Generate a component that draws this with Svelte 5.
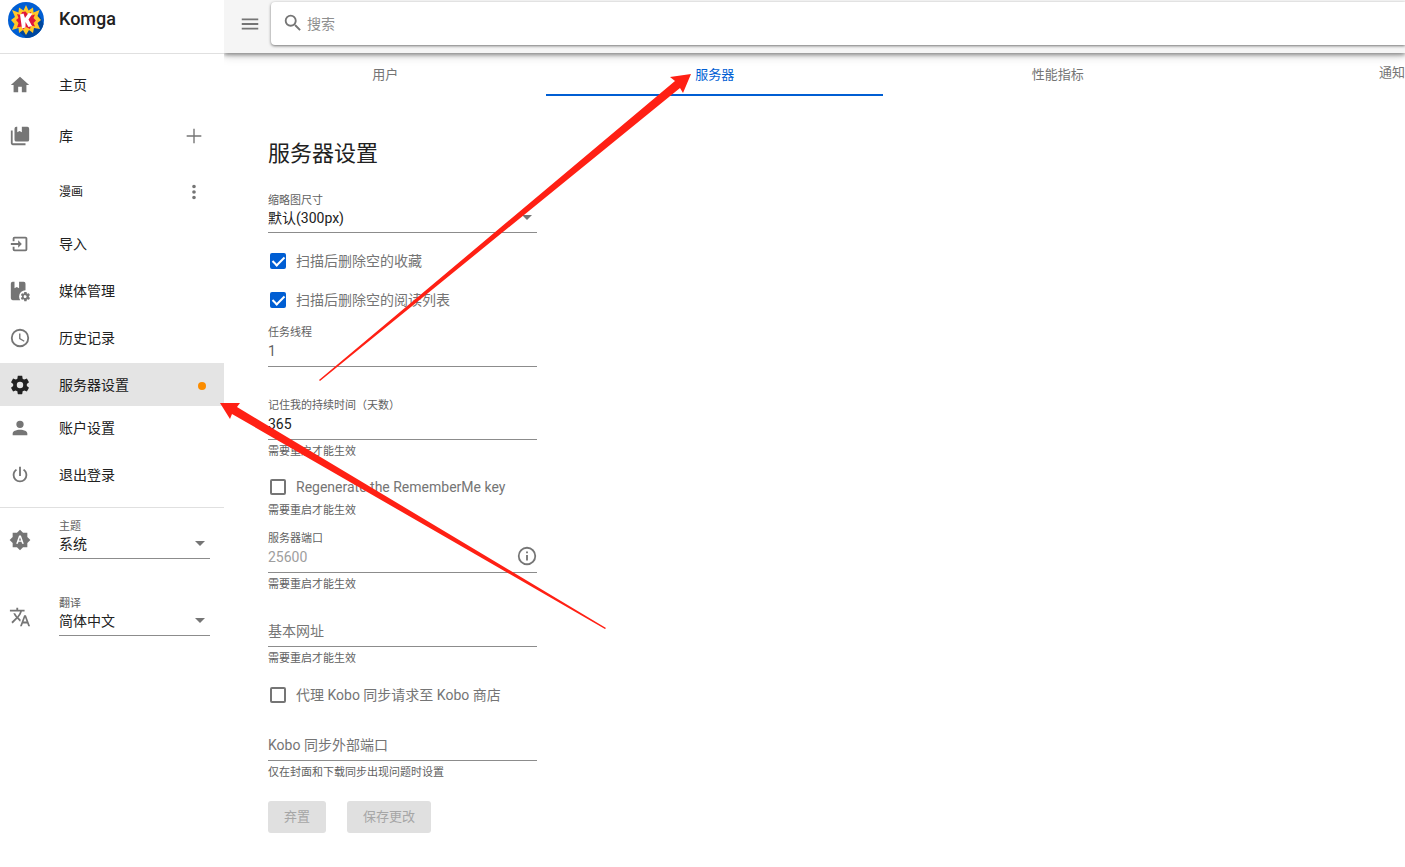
<script lang="ts">
  const icons: Record<string, string> = {
    home: 'M10,20V14H14V20H19V12H22L12,3L2,12H5V20H10Z',
    import: 'M14,12L10,8V11H2V13H10V16M20,18V6C20,4.89 19.1,4 18,4H6A2,2 0 0,0 4,6V9H6V6H18V18H6V15H4V18A2,2 0 0,0 6,20H18A2,2 0 0,0 20,18Z',
    library: 'M8,2H9V8L11.500,6.500L14,8V2H20A2,2 0 0,1 22,4V16A2,2 0 0,1 20,18H8A2,2 0 0,1 6,16V4A2,2 0 0,1 8,2M4,6V20H18V22H4A2,2 0 0,1 2,20V6H4Z',
    bookCog: 'M4,2H6V9L8.500,7.500L11,9V2H16A2,2 0 0,1 18,4V11.100A7,7 0 0,0 11,18A7,7 0 0,0 12.300,22H4A2,2 0 0,1 2,20V4A2,2 0 0,1 4,2M22.700,19.400L21.700,18.600V17.500L22.700,16.700C22.800,16.600 22.900,16.500 22.800,16.300L21.800,14.600C21.700,14.500 21.600,14.500 21.500,14.500L20.200,15L19.400,14.500L19.200,13.200C19.200,13.100 19.100,13 18.900,13H16.900C16.800,13 16.700,13.100 16.600,13.200L16.400,14.500L15.600,15L14.400,14.500C14.300,14.500 14.100,14.500 14,14.600L13,16.300C12.900,16.500 13,16.600 13.100,16.700L14.200,17.500V18.600L13.100,19.400C13,19.500 13,19.600 13,19.800L14,21.500C14.100,21.600 14.300,21.600 14.400,21.600L15.600,21.100L16.400,21.600L16.600,22.900C16.700,23 16.800,23.100 16.900,23.100H18.900C19.100,23.100 19.200,23 19.200,22.900L19.400,21.600L20.200,21.100L21.500,21.600C21.600,21.600 21.700,21.600 21.800,21.500L22.800,19.800C22.900,19.700 22.800,19.500 22.700,19.400M18,19.600A1.600,1.600 0 1,1 18,16.500A1.600,1.600 0 0,1 18,19.600Z',
    clock: 'M12,20A8,8 0 0,0 20,12A8,8 0 0,0 12,4A8,8 0 0,0 4,12A8,8 0 0,0 12,20M12,2A10,10 0 0,1 22,12A10,10 0 0,1 12,22A10,10 0 0,1 2,12A10,10 0 0,1 12,2M12.500,7V12.250L17,14.920L16.250,16.150L11,13V7H12.500Z',
    cog: 'M12,15.5A3.5,3.5 0 0,1 8.5,12A3.5,3.5 0 0,1 12,8.500A3.5,3.5 0 0,1 15.5,12A3.5,3.5 0 0,1 12,15.5M19.43,12.97C19.47,12.65 19.5,12.33 19.5,12C19.5,11.67 19.47,11.34 19.43,11L21.54,9.37C21.73,9.22 21.78,8.95 21.66,8.73L19.66,5.27C19.54,5.05 19.27,4.96 19.05,5.05L16.56,6.05C16.04,5.66 15.5,5.32 14.87,5.07L14.5,2.42C14.46,2.18 14.25,2 14,2H10C9.75,2 9.54,2.18 9.5,2.42L9.13,5.07C8.5,5.32 7.96,5.66 7.44,6.05L4.95,5.05C4.73,4.96 4.46,5.05 4.34,5.27L2.34,8.73C2.21,8.95 2.27,9.22 2.46,9.37L4.57,11C4.53,11.34 4.5,11.67 4.5,12C4.5,12.33 4.53,12.65 4.57,12.97L2.46,14.63C2.27,14.78 2.21,15.05 2.34,15.27L4.34,18.73C4.46,18.95 4.73,19.03 4.95,18.95L7.44,17.94C7.96,18.34 8.5,18.68 9.13,18.93L9.5,21.58C9.54,21.82 9.75,22 10,22H14C14.25,22 14.46,21.82 14.5,21.58L14.87,18.93C15.5,18.67 16.04,18.34 16.56,17.94L19.05,18.95C19.27,19.03 19.54,18.95 19.66,18.73L21.66,15.27C21.78,15.05 21.73,14.78 21.54,14.63L19.43,12.97Z',
    account: 'M12,4A4,4 0 0,1 16,8A4,4 0 0,1 12,12A4,4 0 0,1 8,8A4,4 0 0,1 12,4M12,14C16.42,14 20,15.79 20,18V20H4V18C4,15.79 7.58,14 12,14Z',
    power: 'M16.56,5.44L15.11,6.89C16.84,7.94 18,9.83 18,12A6,6 0 0,1 12,18A6,6 0 0,1 6,12C6,9.83 7.16,7.94 8.88,6.88L7.44,5.44C5.36,6.88 4,9.28 4,12A8,8 0 0,0 12,20A8,8 0 0,0 20,12C20,9.28 18.64,6.88 16.56,5.44M13,3H11V13H13',
    theme: 'M10.85,12.65H13.15L12,9L10.85,12.65M20,8.69V4H15.31L12,0.69L8.69,4H4V8.69L0.69,12L4,15.31V20H8.69L12,23.31L15.31,20H20V15.31L23.31,12L20,8.69M14.3,16L13.6,14H10.4L9.7,16H7.8L11,7H13L16.2,16H14.3Z',
    translate: 'M12.87,15.07L10.33,12.56L10.36,12.53C12.1,10.59 13.34,8.36 14.07,6H17V4H10V2H8V4H1V6H12.17C11.5,7.92 10.44,9.75 9,11.35C8.07,10.32 7.3,9.19 6.69,8H4.69C5.42,9.63 6.42,11.17 7.67,12.56L2.58,17.58L4,19L9,14L12.11,17.11L12.87,15.07M18.5,10H16.5L12,22H14L15.12,19H19.87L21,22H23L18.5,10M15.88,17L17.5,12.67L19.12,17H15.88Z',
    plus: 'M20,12.750H12.750V20H11.250V12.750H4V11.250H11.250V4H12.750V11.250H20V12.750Z',
    dots: 'M12,16A2,2 0 1,1 12,20A2,2 0 0,1 12,16M12,10A2,2 0 1,1 12,14A2,2 0 0,1 12,10M12,4A2,2 0 1,1 12,8A2,2 0 0,1 12,4Z',
    menu: 'M3,6H21V8H3V6M3,11H21V13H3V11M3,16H21V18H3V16Z',
    search: 'M9.5,3A6.5,6.5 0 0,1 16,9.5C16,11.11 15.41,12.59 14.44,13.73L14.71,14H15.5L20.5,19L19,20.5L14,15.5V14.71L13.73,14.44C12.59,15.41 11.11,16 9.5,16A6.5,6.5 0 0,1 3,9.5A6.5,6.5 0 0,1 9.5,3M9.5,5C7,5 5,7 5,9.5C5,12 7,14 9.5,14C12,14 14,12 14,9.5C14,7 12,5 9.5,5Z',
    info: 'M11,9H13V7H11M12,20C7.59,20 4,16.41 4,12C4,7.59 7.59,4 12,4C16.41,4 20,7.59 20,12C20,16.41 16.41,20 12,20M12,2A10,10 0 1,0 12,22A10,10 0 0,0 12,2M11,17H13V11H11V17Z',
  };

  let threads = $state('1');
  let duration = $state('365');
</script>

{#snippet icon(name: string)}
  <svg class="icon" viewBox="0 0 24 24" aria-hidden="true"><path d={icons[name]} /></svg>
{/snippet}

{#snippet nav(name: string, label: string)}
  <a class="item" href="#{name}">{@render icon(name)}<span>{label}</span></a>
{/snippet}

<div class="app">
  <aside>
    <header class="brand">
      <svg class="logo" viewBox="0 0 36 36" aria-hidden="true">
        <circle cx="18" cy="18" r="18" fill="#005ed3" />
        <path d="M31 12L35.500 22A18 18 0 0 1 18 36L10 29Z" fill="#00479d" />
        <path d="M18 3L20.500 8.500L25 5.500L25.500 10.500L31.500 8L29.500 14L33 18L29.500 21L32 27L26 26L25 31L21 28L18 33L15 28L11 31L10.500 26L4 28L6.500 22L3 18L7 15L4 8L10.500 10.500L11 5.500L15.500 8.500Z" fill="#ffc728" />
        <path d="M17.500 9.500L19.500 12L23 10L23.500 13.500L27 12.500L25.500 16L28 18.500L25.500 21L27 24.500L23 23.500L22 27L18 25L15 27.500L13.500 24.500L9 25.500L10.500 21L8 18L10.500 16L9 12L13 13L14 10Z" fill="#e1183b" />
        <path d="M12 12.500L15.500 11.500L17 16L20.500 11L24.500 11.500L20.500 17.500L24 24L20.500 25L17.500 20L17.500 25.500L14 26.500Z" fill="#fff" />
      </svg>
      <span class="title">Komga</span>
    </header>
    <nav>
      {@render nav('home', '主页')}
      <div class="row">
        <a class="item" href="#libraries">{@render icon('library')}<span>库</span></a>
        <button class="action" aria-label="添加库">{@render icon('plus')}</button>
      </div>
      <div class="row">
        <a class="item small" href="#comics"><i class="blank"></i><span>漫画</span></a>
        <button class="action" aria-label="更多">{@render icon('dots')}</button>
      </div>
      {@render nav('import', '导入')}
      {@render nav('bookCog', '媒体管理')}
      {@render nav('clock', '历史记录')}
      <a class="item active" href="#settings" aria-current="page">{@render icon('cog')}<span>服务器设置</span><i class="dot"></i></a>
      {@render nav('account', '账户设置')}
      {@render nav('power', '退出登录')}
    </nav>
    <div class="prefs">
      <div class="pref">
        {@render icon('theme')}
        <div class="field">
          <label for="theme">主题</label>
          <div class="select"><select id="theme"><option>系统</option></select></div>
        </div>
      </div>
      <div class="pref">
        {@render icon('translate')}
        <div class="field">
          <label for="lang">翻译</label>
          <div class="select"><select id="lang"><option>简体中文</option></select></div>
        </div>
      </div>
    </div>
  </aside>

  <main>
    <header class="bar">
      <button class="menu" aria-label="菜单">{@render icon('menu')}</button>
      <label class="search">{@render icon('search')}<input type="search" placeholder="搜索" aria-label="搜索" /></label>
    </header>
    <nav class="tabs">
      <a href="#users">用户</a>
      <a class="current" href="#server" aria-current="page">服务器</a>
      <a class="metrics" href="#metrics">性能指标</a>
      <a class="last" href="#news">通知</a>
    </nav>

    <form>
      <h1>服务器设置</h1>
      <div class="field">
        <label for="thumb">缩略图尺寸</label>
        <div class="select"><select id="thumb"><option>默认(300px)</option></select></div>
      </div>
      <div class="checks">
        <label class="check"><input type="checkbox" checked />扫描后删除空的收藏</label>
        <label class="check"><input type="checkbox" checked />扫描后删除空的阅读列表</label>
      </div>
      <div class="field threads">
        <label for="threads">任务线程</label>
        <input id="threads" type="text" bind:value={threads} />
      </div>
      <div class="field">
        <label for="days">记住我的持续时间（天数）</label>
        <input id="days" type="text" bind:value={duration} />
        <p>需要重启才能生效</p>
      </div>
      <div class="regen">
        <label class="check"><input type="checkbox" />Regenerate the RememberMe key</label>
        <p>需要重启才能生效</p>
      </div>
      <div class="field">
        <label for="port">服务器端口</label>
        <div class="with-icon">
          <input id="port" type="text" placeholder="25600" />
          {@render icon('info')}
        </div>
        <p>需要重启才能生效</p>
      </div>
      <div class="field base">
        <input type="text" placeholder="基本网址" aria-label="基本网址" />
        <p>需要重启才能生效</p>
      </div>
      <label class="check proxy"><input type="checkbox" />代理 Kobo 同步请求至 Kobo 商店</label>
      <div class="field kobo">
        <input type="text" placeholder="Kobo 同步外部端口" aria-label="Kobo 同步外部端口" />
        <p>仅在封面和下载同步出现问题时设置</p>
      </div>
      <div class="buttons">
        <button type="button" disabled>弃置</button>
        <button type="button" disabled>保存更改</button>
      </div>
    </form>
  </main>

  <svg class="arrows" width="720" height="640" aria-hidden="true">
    <path d="M319 380L675 81L670 77L691 74L683 93L680 88L320 381Z" />
    <path d="M606 628L237 407L240 403L220 403L230 419L232 414L605 629Z" />
  </svg>
</div>

<style>
  :global(body) { margin: 0; background: #fff; }
  * { box-sizing: border-box; }
  .app {
    position: relative;
    display: flex;
    min-height: 100vh;
    overflow: hidden;
    font: 14px/20px Roboto, "Noto Sans CJK SC", sans-serif;
    color: #212121;
  }
  a { color: inherit; text-decoration: none; }
  input, select, button { font: inherit; color: inherit; margin: 0; padding: 0; border: 0; background: none; outline: 0; }
  button { display: flex; align-items: center; justify-content: center; }
  .icon { display: block; flex: none; width: 22px; height: 22px; fill: #757575; }

  aside { position: relative; z-index: 1; flex: none; width: 224px; background: #fff; }
  .brand { display: flex; align-items: flex-start; gap: 15px; height: 54px; padding: 2px 8px; border-bottom: 1px solid #e0e0e0; }
  .logo { width: 36px; height: 36px; }
  .title { font-size: 18px; font-weight: 500; line-height: 34px; }
  aside > nav { padding: 7px 0 9px; border-bottom: 1px solid #e0e0e0; }
  .item { display: flex; align-items: center; flex: 1; gap: 28px; height: 47px; padding: 0 9px; }
  .row { display: flex; align-items: center; height: 56px; padding-right: 19px; }
  .small { font-size: 12px; }
  .blank { width: 22px; }
  .action { width: 22px; height: 22px; }
  .active { height: 43px; margin: 2px 0 -2px; background: #e4e4e4; }
  .active .icon { fill: #212121; }
  .dot { width: 8px; height: 8px; margin: 2px 9px 0 auto; border-radius: 50%; background: #fb8c00; }
  .prefs { display: grid; gap: 38px; padding: 12px 14px 0 9px; }
  .pref { display: flex; align-items: center; gap: 28px; }
  .pref .field { flex: 1; }

  main { flex: 1; min-width: 0; }
  .bar { position: relative; display: flex; height: 53px; padding: 2px 0 8px; background: #f5f5f5; box-shadow: 0 2px 4px #0006, 0 4px 9px #0002; }
  .menu { flex: none; width: 47px; padding-left: 4px; }
  .search { display: flex; flex: 1; align-items: center; gap: 3px; padding: 0 0 2px 11px; background: #fff; border-radius: 4px 0 0 4px; box-shadow: 0 1px 3px #0008; }
  .search input { flex: 1; min-width: 0; padding-top: 2px; }
  ::placeholder { color: #757575; opacity: 1; }
  #port::placeholder { color: #9e9e9e; }
  .search ::placeholder { color: #8f8f8f; }
  .tabs { display: flex; height: 43px; font-size: 13px; color: #757575; }
  .tabs a { display: flex; flex: 0 0 27%; align-items: center; justify-content: center; padding-top: 2px; border-bottom: 2px solid transparent; }
  .tabs a:first-child { flex-basis: 27.3%; }
  .tabs a.current { flex-basis: 28.5%; color: #005ed3; border-color: #005ed3; }
  .tabs a.metrics { flex-basis: 29.6%; }
  .tabs a.last { padding: 0 0 2px; }

  form { max-width: 313px; padding: 42px 0 32px 44px; }
  h1 { margin: 0 0 24px; font-size: 22px; line-height: 32px; font-weight: 400; }
  .field { display: flex; flex-direction: column; }
  .field > label { font-size: 11px; line-height: 13px; color: #616161; }
  .field input, .field select { display: block; width: 100%; border-bottom: 1px solid #8c8c8c; border-radius: 0; }
  .field input { height: 28px; padding-bottom: 4px; }
  .field select { appearance: none; height: 26px; padding-bottom: 4px; }
  .select { position: relative; }
  .select::after { content: ""; position: absolute; right: 5px; top: 8px; border: 5px solid transparent; border-top-color: #757575; border-bottom: 0; pointer-events: none; }
  .with-icon { position: relative; }
  .with-icon .icon { position: absolute; right: -1px; top: 0; }
  p { margin: 5px 0 0; font-size: 11px; line-height: 14px; color: #616161; }
  .check { display: flex; align-items: center; gap: 10px; height: 20px; padding-left: 2px; color: #757575; white-space: nowrap; }
  .check input { display: grid; place-items: center; flex: none; appearance: none; width: 16px; height: 16px; border: 2px solid #757575; border-radius: 2px; }
  .check input:checked { border-color: #005ed3; background: #005ed3; }
  .check input:checked::after { content: ""; width: 5px; height: 10px; margin-top: -3px; border: solid #fff; border-width: 0 2px 2px 0; transform: rotate(45deg); }
  .checks { display: grid; gap: 19px; padding: 18px 0 16px; }
  .threads { margin-bottom: 32px; }
  .threads input { color: #616161; }
  .regen { margin: 18px 0 14px; }
  .regen p { margin-top: 7px; }
  .base { margin-top: 27px; }
  .proxy { margin-top: 19px; }
  .kobo { margin-top: 28px; }
  .buttons { display: flex; gap: 21px; margin-top: 21px; }
  .buttons button { height: 32px; padding: 0 16px; border-radius: 3px; background: #e0e0e0; color: #a6a6a6; font-size: 13px; }
  .arrows { position: absolute; z-index: 2; left: 0; top: 0; fill: #ff2014; pointer-events: none; }
</style>
